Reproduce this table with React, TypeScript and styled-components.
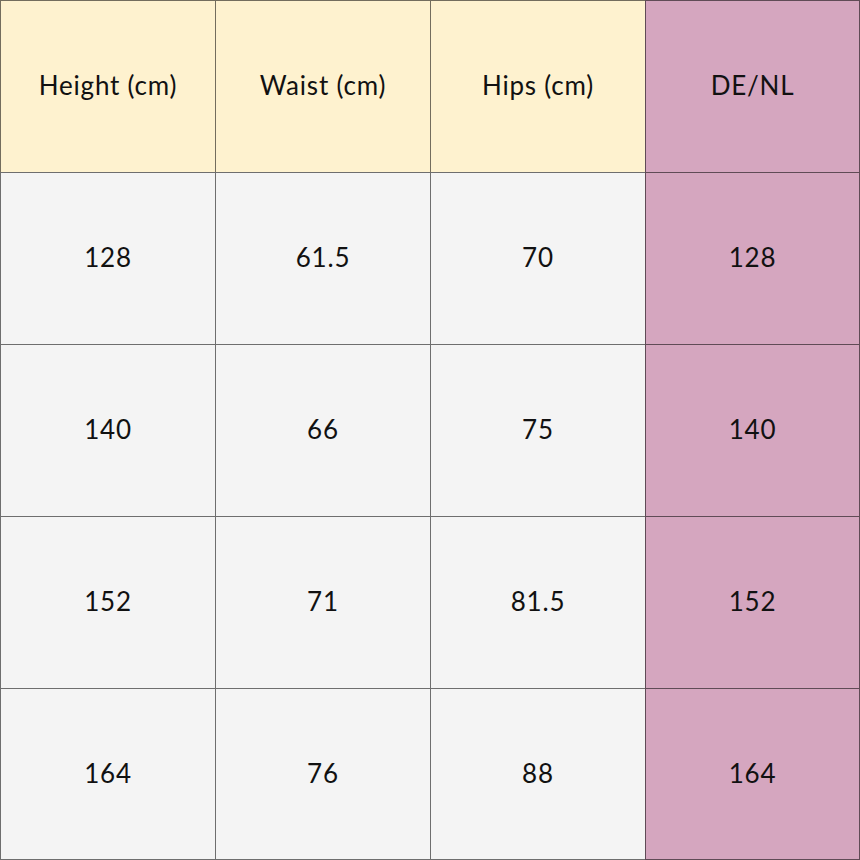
import React from 'react';
import styled, { createGlobalStyle } from 'styled-components';

const GlobalStyle = createGlobalStyle`
  html, body {
    margin: 0;
    padding: 0;
    background: #ffffff;
  }
`;

const Table = styled.div`
  display: grid;
  grid-template-columns: repeat(4, 215px);
  grid-template-rows: repeat(5, 172px);
  width: 860px;
  height: 860px;
  font-family: Lato, 'Open Sans', sans-serif;
  color: #111111;
`;

type Tone = 'head' | 'body' | 'size';

const tones: Record<Tone, string> = {
  head: '#fef2cf',
  body: '#f4f4f4',
  size: '#d5a6bf',
};

const line = '1px solid rgba(0, 0, 0, 0.55)';

const Cell = styled.div<{ $tone: Tone; $lastCol: boolean; $lastRow: boolean }>`
  box-sizing: border-box;
  display: flex;
  align-items: center;
  justify-content: center;
  padding-bottom: 3px;
  background: ${(p) => tones[p.$tone]};
  border-left: ${line};
  border-top: ${line};
  border-right: ${(p) => (p.$lastCol ? line : 'none')};
  border-bottom: ${(p) => (p.$lastRow ? line : 'none')};
  font-size: 26px;
  letter-spacing: 0.8px;
`;

const header = ['Height (cm)', 'Waist (cm)', 'Hips (cm)', 'DE/NL'];

const rows = [
  ['128', '61.5', '70', '128'],
  ['140', '66', '75', '140'],
  ['152', '71', '81.5', '152'],
  ['164', '76', '88', '164'],
];

function App() {
  const all = [header, ...rows];
  return (
    <>
      <GlobalStyle />
      <Table>
        {all.map((row, r) =>
          row.map((text, c) => (
            <Cell
              key={`${r}-${c}`}
              $tone={c === 3 ? 'size' : r === 0 ? 'head' : 'body'}
              $lastCol={c === 3}
              $lastRow={r === all.length - 1}
            >
              {text}
            </Cell>
          ))
        )}
      </Table>
    </>
  );
}

export default App;
